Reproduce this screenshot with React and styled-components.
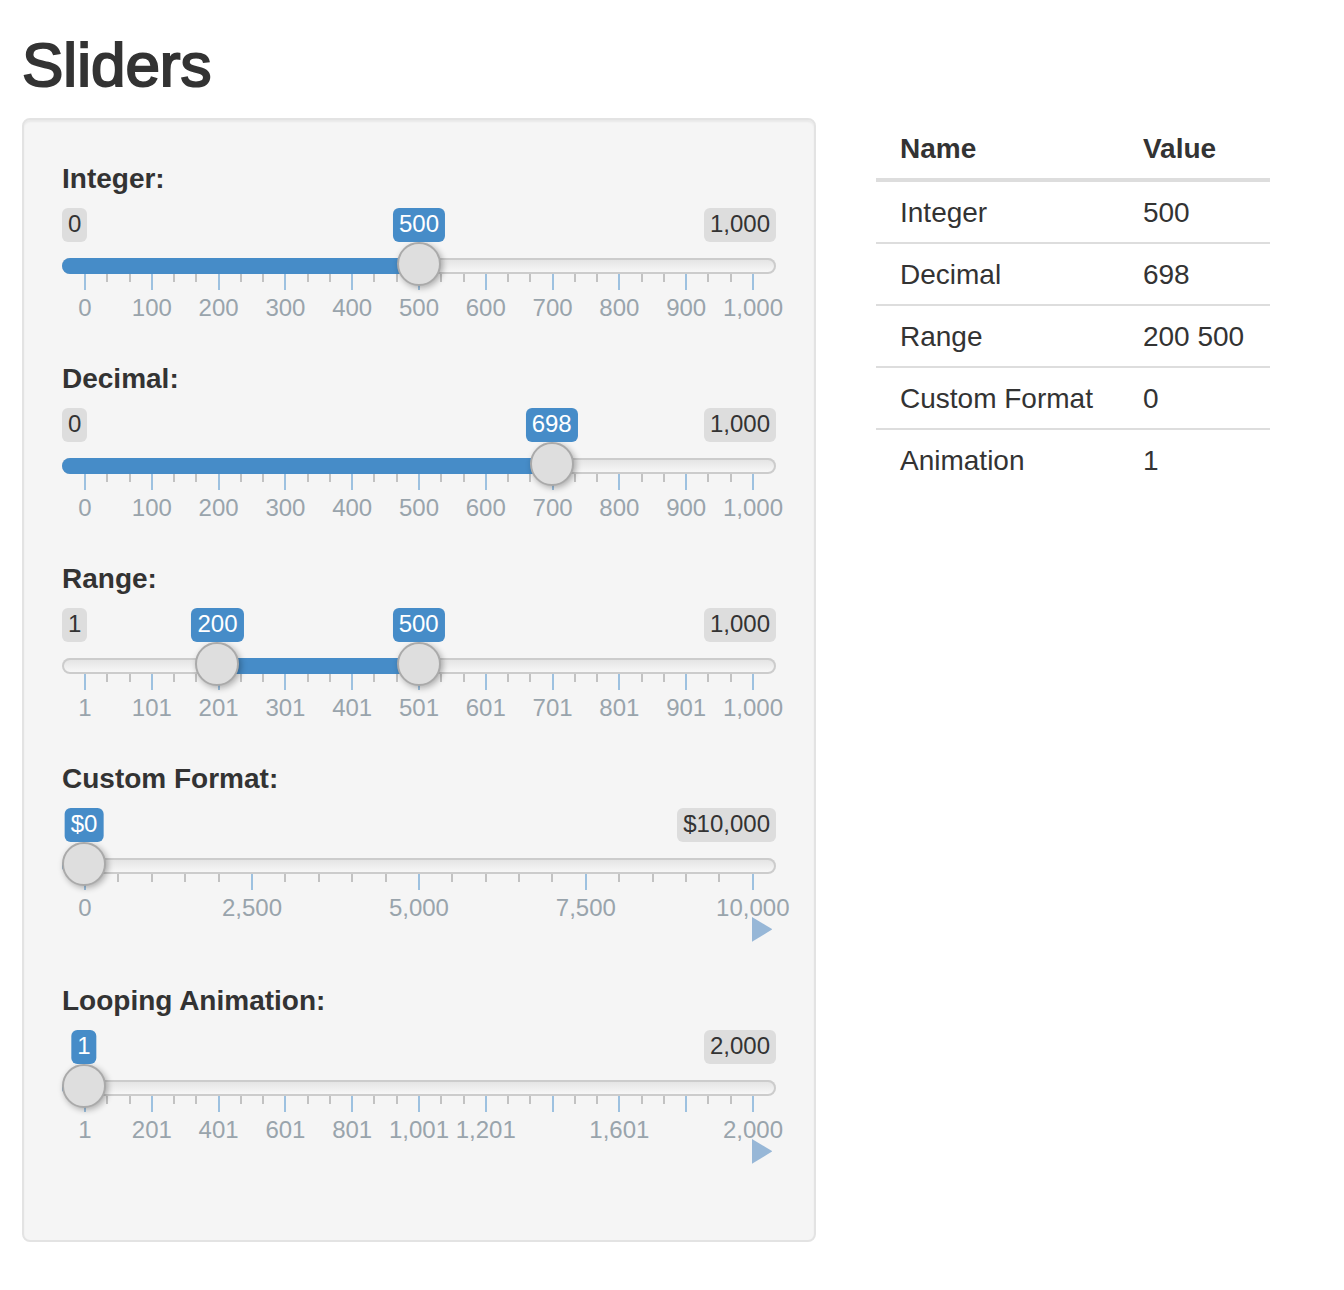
import React, { useEffect, useState } from "react";
import styled, { createGlobalStyle } from "styled-components";

const THUMB = 44;

const GlobalStyle = createGlobalStyle`
  *, *::before, *::after { box-sizing: border-box; }
  body {
    margin: 0;
    background: #fff;
    color: #333;
    font-family: "Helvetica Neue", Helvetica, "Liberation Sans", Arial, sans-serif;
    font-size: 28px;
    line-height: 40px;
  }
`;

const Page = styled.main`
  padding: 32px 71px 48px 22px;
`;

const Title = styled.h2`
  margin: 0 0 20px;
  font-size: 62px;
  line-height: 66px;
  font-weight: 400;
  -webkit-text-stroke: 2px #333;
`;

const Columns = styled.div`
  display: grid;
  grid-template-columns: minmax(0, 2fr) minmax(0, 1fr);
  gap: 60px;
  align-items: start;
`;

const Panel = styled.form`
  padding: 38px;
  background: #f5f5f5;
  border: 2px solid #e3e3e3;
  border-radius: 8px;
  box-shadow: inset 0 2px 2px rgba(0, 0, 0, 0.05);
`;

const Group = styled.div`
  display: flex;
  flex-direction: column;
  margin-bottom: 38px;
`;

const GroupLabel = styled.label`
  align-self: flex-start;
  padding: 1px 0 9px;
  font-weight: 700;
`;

const Badges = styled.div`
  position: relative;
  display: flex;
  justify-content: space-between;
`;

const Badge = styled.span`
  padding: 4px 6px 6px;
  border-radius: 6px;
  background: #ddd;
  color: #333;
  font-size: 24px;
  line-height: 24px;
  visibility: ${(p) => (p.$hidden ? "hidden" : "visible")};
`;

const ValueBadge = styled(Badge)`
  position: absolute;
  top: 0;
  left: calc(${THUMB / 2}px + (100% - ${THUMB}px) * var(--at));
  transform: translateX(-50%);
  background: #468cc8;
  color: #fff;
`;

const Stage = styled.div`
  display: grid;
  grid-template-columns: minmax(0, 1fr);
  align-items: start;

  > * {
    grid-area: 1 / 1;
  }
`;

const Rail = styled.div`
  height: 16px;
  margin-top: 16px;
  border-radius: 8px;
  overflow: hidden;
  background: linear-gradient(to bottom, #e2e2e2, #fafafa);
  box-shadow: inset 0 0 0 2px #ccc;
`;

const Fill = styled.div`
  height: 100%;
  margin-left: ${(p) => (p.$fromEdge ? "0" : `calc(${THUMB / 2}px + (100% - ${THUMB}px) * var(--from))`)};
  margin-right: calc(${THUMB / 2}px + (100% - ${THUMB}px) * (1 - var(--to)));
  background: #468cc8;
`;

const Scale = styled.div`
  display: flex;
  justify-content: space-between;
  margin-top: 32px;
  padding: 0 ${THUMB / 2}px;
  height: 46px;
`;

const Tick = styled.div`
  display: flex;
  flex-direction: column;
  align-items: center;
  gap: 6px;
  width: 2px;
  color: #99a4ac;
  font-size: 24px;
  line-height: 24px;
  white-space: nowrap;

  &::before {
    content: "";
    flex: none;
    width: 2px;
    height: ${(p) => (p.$major ? 16 : 8)}px;
    background: ${(p) => (p.$major ? "#9dc1e0" : "#c2c2c2")};
  }
`;

const RangeInput = styled.input`
  appearance: none;
  width: 100%;
  height: 48px;
  margin: 0;
  background: transparent;
  pointer-events: none;

  &:focus {
    outline: none;
  }

  &::-webkit-slider-runnable-track {
    height: 48px;
    background: transparent;
  }

  &::-webkit-slider-thumb {
    appearance: none;
    width: ${THUMB}px;
    height: ${THUMB}px;
    border: 2px solid #aaa;
    border-radius: 50%;
    background: #dedede;
    box-shadow: 2px 2px 6px rgba(0, 0, 0, 0.3);
    cursor: pointer;
    pointer-events: auto;
  }
`;

const PlayButton = styled.button`
  z-index: 1;
  align-self: flex-end;
  display: flex;
  height: 26px;
  margin: -4px 0 0;
  padding: 1px 4px 0 0;
  border: 0;
  background: transparent;
  color: #97b7d7;
  cursor: pointer;
`;

const Table = styled.table`
  justify-self: start;
  border-collapse: separate;
  border-spacing: 0;
  white-space: nowrap;

  th,
  td {
    padding: 11px 26px 9px 24px;
    text-align: left;
  }

  th {
    border-bottom: 4px solid #ddd;
  }

  tr + tr td {
    border-top: 2px solid #ddd;
  }
`;

const everyThird = (labels) =>
  labels.flatMap((label, i) =>
    i === labels.length - 1 ? [{ major: true, label }] : [{ major: true, label }, {}, {}]
  );

const hundreds = everyThird(["0", "100", "200", "300", "400", "500", "600", "700", "800", "900", "1,000"]);
const offsetHundreds = everyThird(["1", "101", "201", "301", "401", "501", "601", "701", "801", "901", "1,000"]);
const thousands = Array.from({ length: 21 }, (_, i) =>
  i % 5 === 0 ? { major: true, label: (i * 500).toLocaleString("en-US") } : {}
);
const twoThousands = everyThird(["1", "201", "401", "601", "801", "1,001", "1,201", "", "1,601", "", "2,000"]);

const SLIDERS = [
  { id: "integer", label: "Integer:", name: "Integer", min: 0, max: 1000, step: 1, ticks: hundreds, start: [500] },
  { id: "decimal", label: "Decimal:", name: "Decimal", min: 0, max: 1000, step: 1, ticks: hundreds, start: [698] },
  { id: "range", label: "Range:", name: "Range", min: 1, max: 1000, step: 1, ticks: offsetHundreds, start: [200, 500] },
  { id: "format", label: "Custom Format:", name: "Custom Format", min: 0, max: 10000, step: 2500, ticks: thousands, start: [0], prefix: "$", animate: true },
  { id: "animation", label: "Looping Animation:", name: "Animation", min: 1, max: 2000, step: 1, jump: 10, ticks: twoThousands, start: [1], animate: true, loop: true },
];

function Slider({ spec, values, onChange }) {
  const { id, label, min, max, step, jump = step, ticks, prefix = "", animate, loop } = spec;
  const [playing, setPlaying] = useState(false);
  const ratio = (v) => (v - min) / (max - min);
  const format = (v) => prefix + v.toLocaleString("en-US");
  const isRange = values.length > 1;
  const first = ratio(values[0]);
  const last = ratio(values[values.length - 1]);

  useEffect(() => {
    if (!playing) return undefined;
    const timer = setTimeout(() => {
      if (values[0] < max) onChange([Math.min(max, values[0] + jump)]);
      else if (loop) onChange([min]);
      else setPlaying(false);
    }, 300);
    return () => clearTimeout(timer);
  }, [playing, values, jump, loop, min, max, onChange]);

  const change = (index, next) =>
    onChange(
      values.map((v, i) => {
        if (i !== index) return v;
        if (!isRange) return next;
        return index === 0 ? Math.min(next, values[1]) : Math.max(next, values[0]);
      })
    );

  return (
    <Group>
      <GroupLabel htmlFor={id}>{label}</GroupLabel>
      <Badges>
        <Badge $hidden={first < 0.05}>{first < 0.05 ? "" : format(min)}</Badge>
        <Badge $hidden={last > 0.93}>{format(max)}</Badge>
        {values.map((v, i) => (
          <ValueBadge key={i} style={{ "--at": ratio(v) }}>{format(v)}</ValueBadge>
        ))}
      </Badges>
      <Stage>
        <Rail>
          <Fill $fromEdge={!isRange} style={{ "--from": first, "--to": last }} />
        </Rail>
        <Scale>
          {ticks.map((tick, i) => (
            <Tick key={i} $major={tick.major}>{tick.label}</Tick>
          ))}
        </Scale>
        {values.map((v, i) => (
          <RangeInput
            key={i}
            id={i === 0 ? id : `${id}-upper`}
            aria-label={i === 0 ? undefined : `${label} upper`}
            type="range"
            min={min}
            max={max}
            step={step}
            value={v}
            onChange={(e) => change(i, Number(e.target.value))}
          />
        ))}
      </Stage>
      {animate && (
        <PlayButton type="button" aria-label={playing ? "Pause" : "Play"} onClick={() => setPlaying(!playing)}>
          <svg width="20" height="25" viewBox="0 0 20 25" fill="currentColor" aria-hidden="true">
            {playing ? <path d="M1 2h6v21H1zM12 2h6v21h-6z" /> : <path d="M0 0 L20.5 12.2 L0 24.8z" />}
          </svg>
        </PlayButton>
      )}
    </Group>
  );
}

export default function App() {
  const [state, setState] = useState(() => Object.fromEntries(SLIDERS.map((s) => [s.id, s.start])));

  return (
    <>
      <GlobalStyle />
      <Page>
        <Title>Sliders</Title>
        <Columns>
          <Panel>
            {SLIDERS.map((spec) => (
              <Slider
                key={spec.id}
                spec={spec}
                values={state[spec.id]}
                onChange={(next) => setState((prev) => ({ ...prev, [spec.id]: next }))}
              />
            ))}
          </Panel>
          <Table>
            <thead>
              <tr>
                <th scope="col">Name</th>
                <th scope="col">Value</th>
              </tr>
            </thead>
            <tbody>
              {SLIDERS.map((spec) => (
                <tr key={spec.id}>
                  <td>{spec.name}</td>
                  <td>{state[spec.id].join(" ")}</td>
                </tr>
              ))}
            </tbody>
          </Table>
        </Columns>
      </Page>
    </>
  );
}
